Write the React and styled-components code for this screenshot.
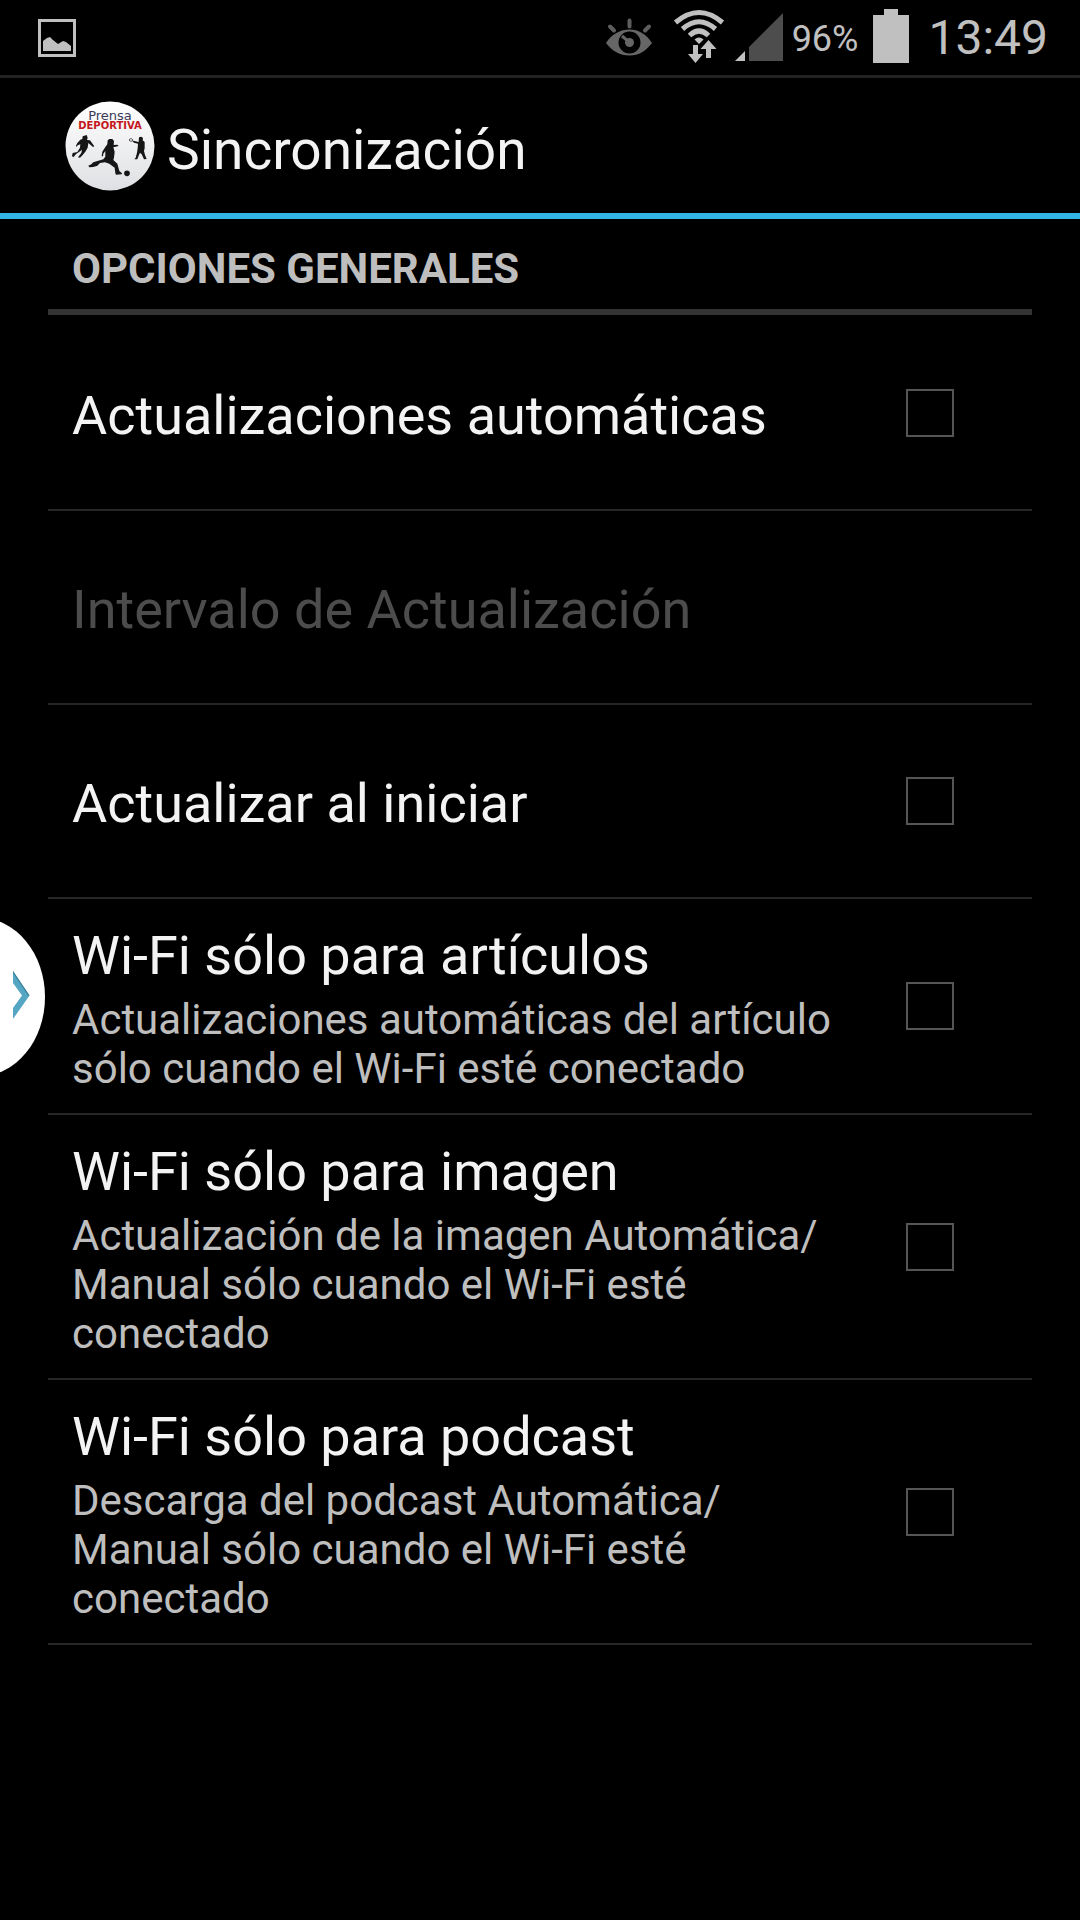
import React, { useState } from "react";
import styled, { createGlobalStyle } from "styled-components";

const GlobalStyle = createGlobalStyle`
  * {
    box-sizing: border-box;
  }

  body {
    margin: 0;
    background: #000;
    color: #f3f3f3;
    font-family: Roboto, "Noto Sans", sans-serif;
  }
`;

const Screen = styled.div`
  min-height: 100vh;
  background: #000;
`;

const StatusBar = styled.div`
  height: 78px;
  padding: 0 32px 0 38px;
  display: flex;
  align-items: center;
  border-bottom: 3px solid #222;
  color: #c0c0c0;

  svg {
    display: block;
    flex: none;
  }
`;

const StatusIcons = styled.div`
  margin-left: auto;
  display: flex;
  align-items: center;
`;

const NetworkIcons = styled.div`
  display: flex;
  gap: 9px;
`;

const Percent = styled.span`
  padding-top: 2px;
  margin: 0 15px 0 9px;
  font-size: 36px;
  line-height: 42px;
`;

const Clock = styled.time`
  margin-left: 19px;
  font-size: 48px;
  line-height: 56px;
`;

const ActionBar = styled.header`
  height: 141px;
  padding-left: 65px;
  display: flex;
  align-items: center;
  gap: 12px;
  border-bottom: 6px solid #33b5e5;
`;

const Title = styled.h1`
  margin: 0;
  padding-top: 8px;
  font-size: 55px;
  font-weight: 400;
  line-height: 64px;
`;

const Preferences = styled.main`
  padding: 0 48px;
`;

const Category = styled.h2`
  height: 96px;
  margin: 0 0 2px;
  padding: 10px 24px 0;
  border-bottom: 6px solid #333;
  color: #bebebe;
  font-size: 42px;
  font-weight: 700;
  line-height: 80px;
`;

const List = styled.ul`
  margin: 0;
  padding: 0;
  list-style: none;
`;

const Item = styled.li`
  border-bottom: 2px solid #262626;
`;

const Row = styled.label`
  min-height: 192px;
  padding: 0 78px 0 24px;
  display: flex;
  align-items: center;
  gap: 66px;
  cursor: pointer;
`;

const RowButton = styled.button`
  width: 100%;
  min-height: 192px;
  padding: 0 78px 0 24px;
  display: flex;
  align-items: center;
  border: 0;
  background: transparent;
  color: #f3f3f3;
  font-family: inherit;
  text-align: left;

  &:disabled {
    color: #4c4c4c;
  }
`;

const RowText = styled.span`
  flex: 1;
  padding: 25px 0 20px;
`;

const RowTitle = styled.span`
  display: block;
  font-size: 54px;
  line-height: 64px;
`;

const Summary = styled.span`
  display: block;
  margin-top: 7px;
  color: #bebebe;
  font-size: 42px;
  line-height: 49px;
`;

const Checkbox = styled.input`
  appearance: none;
  flex: none;
  width: 48px;
  height: 48px;
  margin: 0;
  border: 2px solid #555;
  background: transparent;
  cursor: pointer;

  &:checked {
    background: #33b5e5;
    box-shadow: inset 0 0 0 8px #000;
  }
`;

// floats over the list on the left edge of the screen
const EdgeHandle = styled.button`
  position: fixed;
  top: 920px;
  left: 0;
  padding: 0;
  border: 0;
  background: transparent;
  cursor: pointer;

  svg {
    display: block;
  }
`;

const PictureIcon = () => (
  <svg width="38" height="38" viewBox="0 0 38 38" aria-hidden="true">
    <rect x="1.5" y="1.5" width="35" height="35" fill="none" stroke="#c0c0c0" strokeWidth="3" />
    <path d="M5 32V22l4-3 3-1 3 3 5 4 5-3 3 1 5 4v5z" fill="#c0c0c0" />
  </svg>
);

const EyeIcon = () => (
  <svg width="61" height="75" viewBox="602 0 61 75" aria-hidden="true">
    <g fill="none" stroke="#5e5e5e" strokeWidth="4" strokeLinecap="round">
      <path d="M629.5 20.500v6M610 26.500l4 4M649 26.500l-4 4" />
    </g>
    <path
      fillRule="evenodd"
      fill="#666"
      d="M606 43C612 34 620 29.500 629.500 29.500S646 34 652 43C646 51 639 55.500 629.500 55.500S612 51 606 43zM629.500 31.500a11 11 0 1 0 0 22a11 11 0 1 0 0-22z"
    />
    <circle cx="629.500" cy="42.500" r="4.500" fill="#666" />
    <path d="M629 42l-7-6" stroke="#666" strokeWidth="3" />
  </svg>
);

const WifiIcon = () => (
  <svg width="54" height="75" viewBox="672 0 54 75" aria-hidden="true">
    <g fill="none" stroke="#c0c0c0" strokeWidth="5">
      <path d="M675.500 22.500Q699 2.500 722.500 22.500" />
      <path d="M682.500 29Q699 14.500 715.500 29" />
      <path d="M689.500 35.500Q699 26.500 708.500 35.500" />
    </g>
    <path d="M694.500 39.500q4.500-4 9 0l-4.500 4.500z" fill="#c0c0c0" />
    <path d="M693 45h5v9h5l-7.500 9-7.500-9h5z" fill="#c0c0c0" />
    <path d="M706 58h5v-9h5.500l-8-9-8 9h5.500z" fill="#c0c0c0" />
  </svg>
);

const SignalIcon = () => (
  <svg width="48" height="75" viewBox="735 0 48 75" aria-hidden="true">
    <path d="M735 61l10-10v10z" fill="#c0c0c0" />
    <path d="M749 61V47l34-34v48z" fill="#4d4d4d" />
  </svg>
);

const BatteryIcon = () => (
  <svg width="36" height="75" viewBox="0 0 36 75" aria-hidden="true">
    <path d="M11 9h14v6h11v48H0V15h11z" fill="#c0c0c0" />
  </svg>
);

const Logo = () => (
  <svg width="90" height="90" viewBox="65 100 90 90" role="img" aria-label="Prensa Deportiva">
    <defs>
      <linearGradient id="disc" x1="0" y1="0" x2="0" y2="1">
        <stop offset="0" stopColor="#fff" />
        <stop offset="1" stopColor="#dfe0e3" />
      </linearGradient>
    </defs>
    <circle cx="110" cy="145" r="44.500" fill="url(#disc)" />
    <text x="110" y="119" textAnchor="middle" fontFamily="DejaVu Sans" fontSize="13" fill="#3a3a58">
      Prensa
    </text>
    <text x="110" y="128" textAnchor="middle" fontFamily="DejaVu Sans" fontWeight="700" fontSize="10" fill="#c4161c">
      DEPORTIVA
    </text>
    <g fill="#161616" transform="translate(50 90) scale(0.3333)">
      {/* runner */}
      <path d="M98 136L110 132L113 140L111 147L120 148L133 166L129 168L115 156L113 170L106 182L98 192L90 200L84 199L94 186L96 176L86 184L79 188L70 199L66 195L68 186L82 183L90 170L91 160L83 163L80 168L78 164L82 156L91 146L97 144z" />
      {/* footballer */}
      <path d="M173 148L178 144L187 144L192 150L191 162L202 161L206 165L190 169L194 182L192 200L190 207L202 218L208 240L216 247L215 250L198 251L196 246L194 230L178 218L165 214L150 216L142 224L130 228L118 229L115 224L124 220L130 214L160 205L166 197L166 180L160 188L159 196L155 196L157 182L166 168L172 160z" />
      <circle cx="231" cy="247" r="8.500" />
      {/* tennis player */}
      <path d="M267 139L274 137L279 141L278 148L284 153L284 172L282 180L285 192L290 204L282 205L275 190L270 185L266 194L262 205L253 205L257 200L261 185L263 172L264 158L252 155L247 150L250 149L266 153z" />
      <ellipse cx="243" cy="147" rx="5" ry="4" fill="none" stroke="#161616" strokeWidth="2" />
    </g>
  </svg>
);

const preferences = [
  { id: "auto", title: "Actualizaciones automáticas" },
  { id: "interval", title: "Intervalo de Actualización", dependsOn: "auto" },
  { id: "start", title: "Actualizar al iniciar" },
  {
    id: "articles",
    title: "Wi-Fi sólo para artículos",
    summary: "Actualizaciones automáticas del artículo sólo cuando el Wi-Fi esté conectado",
  },
  {
    id: "images",
    title: "Wi-Fi sólo para imagen",
    summary: (
      <>
        Actualización de la imagen Automática/
        <wbr />
        Manual sólo cuando el Wi-Fi esté conectado
      </>
    ),
  },
  {
    id: "podcast",
    title: "Wi-Fi sólo para podcast",
    summary: (
      <>
        Descarga del podcast Automática/
        <wbr />
        Manual sólo cuando el Wi-Fi esté conectado
      </>
    ),
  },
];

const App = () => {
  const [values, setValues] = useState({});

  const toggle = (id) => setValues({ ...values, [id]: !values[id] });

  return (
    <Screen>
      <GlobalStyle />
      <StatusBar>
        <PictureIcon />
        <StatusIcons>
          <NetworkIcons>
            <EyeIcon />
            <WifiIcon />
            <SignalIcon />
          </NetworkIcons>
          <Percent>96%</Percent>
          <BatteryIcon />
          <Clock>13:49</Clock>
        </StatusIcons>
      </StatusBar>
      <ActionBar>
        <Logo />
        <Title>Sincronización</Title>
      </ActionBar>
      <Preferences>
        <Category>OPCIONES GENERALES</Category>
        <List>
          {preferences.map(({ id, title, summary, dependsOn }) => (
            <Item key={id}>
              {dependsOn ? (
                <RowButton type="button" disabled={!values[dependsOn]}>
                  <RowText>
                    <RowTitle>{title}</RowTitle>
                  </RowText>
                </RowButton>
              ) : (
                <Row htmlFor={id}>
                  <RowText>
                    <RowTitle>{title}</RowTitle>
                    {summary && <Summary>{summary}</Summary>}
                  </RowText>
                  <Checkbox id={id} type="checkbox" checked={!!values[id]} onChange={() => toggle(id)} />
                </Row>
              )}
            </Item>
          ))}
        </List>
      </Preferences>
      <EdgeHandle type="button" aria-label="Abrir panel">
        <svg width="46" height="154" viewBox="0 0 46 154" aria-hidden="true">
          <ellipse cx="-20" cy="77" rx="65" ry="79" fill="#fff" />
          <path d="M13 51l16.500 24.500L13 99V88l9-12.500L13 63z" fill="#55a6c3" />
          <path d="M13 51l16.500 24.500-1 .500L13 53z" fill="#3a7d96" />
        </svg>
      </EdgeHandle>
    </Screen>
  );
};

export default App;
